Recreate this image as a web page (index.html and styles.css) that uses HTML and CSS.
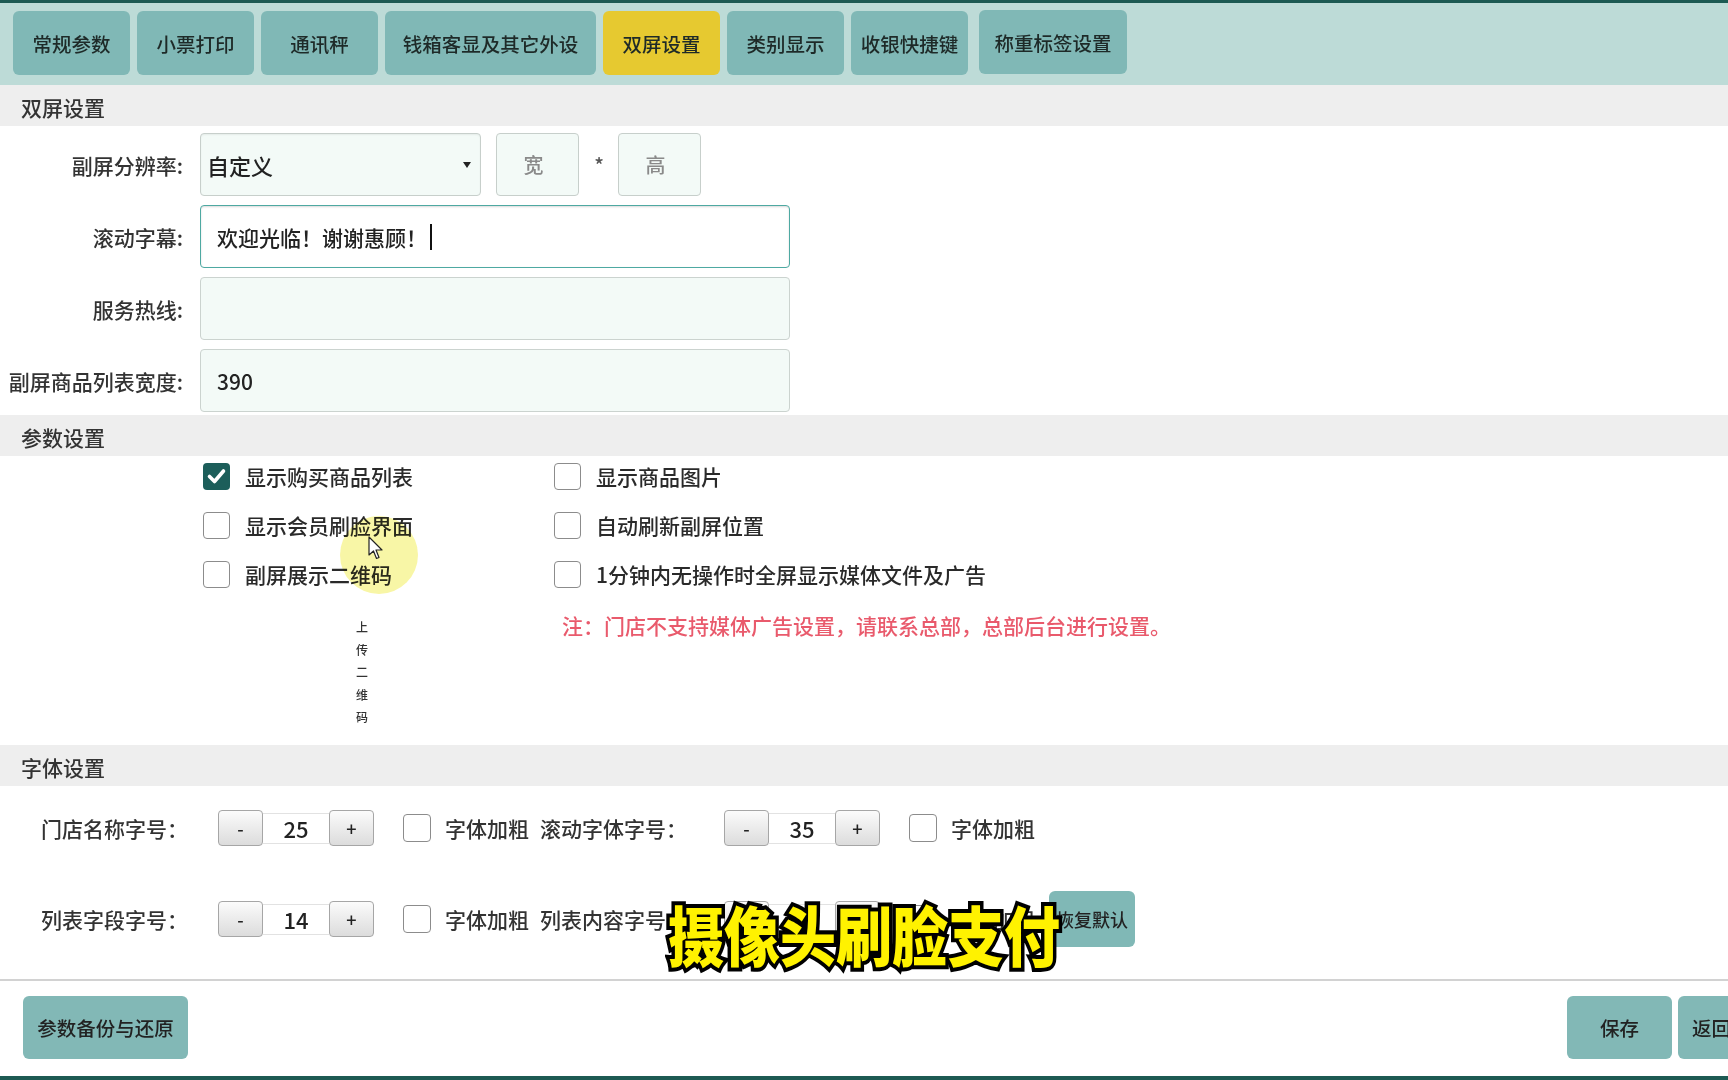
FILE: index.html
```html
<!DOCTYPE html>
<html lang="zh-CN">
<head>
<meta charset="utf-8">
<title>双屏设置</title>
<link rel="stylesheet" href="styles.css">
</head>
<body>
<div class="topline"></div>
<nav class="tabbar">
  <div class="tab">常规参数</div>
  <div class="tab">小票打印</div>
  <div class="tab">通讯秤</div>
  <div class="tab tab-wide">钱箱客显及其它外设</div>
  <div class="tab active">双屏设置</div>
  <div class="tab">类别显示</div>
  <div class="tab">收银快捷键</div>
  <div class="tab tab-label">称重标签设置</div>
</nav>

<div class="sec-head first">双屏设置</div>
<div class="form">
  <div class="frow">
    <label class="flabel">副屏分辨率:</label>
    <div class="select"><span>自定义</span><span class="caret"></span></div>
    <div class="dim">宽</div>
    <span class="star">*</span>
    <div class="dim">高</div>
  </div>
  <div class="frow">
    <label class="flabel">滚动字幕:</label>
    <div class="input wide focus"><span>欢迎光临！谢谢惠顾！</span><span class="textcaret"></span></div>
  </div>
  <div class="frow">
    <label class="flabel">服务热线:</label>
    <div class="input wide"></div>
  </div>
  <div class="frow">
    <label class="flabel">副屏商品列表宽度:</label>
    <div class="input wide"><span>390</span></div>
  </div>
</div>

<div class="sec-head">参数设置</div>
<div class="params">
  <div class="checks">
    <div class="chk"><span class="box checked"><svg viewBox="0 0 27 27" width="27" height="27"><path d="M6.5 13.5 L11.5 18.5 L20.5 8" fill="none" stroke="#fff" stroke-width="3.6" stroke-linecap="round" stroke-linejoin="round"/></svg></span><span>显示购买商品列表</span></div>
    <div class="chk"><span class="box"></span><span>显示商品图片</span></div>
    <div class="chk"><span class="box"></span><span>显示会员刷脸界面</span></div>
    <div class="chk"><span class="box"></span><span>自动刷新副屏位置</span></div>
    <div class="chk"><span class="box"></span><span>副屏展示二维码</span></div>
    <div class="chk"><span class="box"></span><span>1分钟内无操作时全屏显示媒体文件及广告</span></div>
  </div>
  <div class="extra">
    <div class="upload-cell"><span class="upload">上传二维码</span></div>
    <div class="note">注：门店不支持媒体广告设置，请联系总部，总部后台进行设置。</div>
  </div>
</div>

<div class="sec-head">字体设置</div>
<div class="fonts">
  <div class="srow">
    <span class="slabel">门店名称字号：</span>
    <div class="stepper"><span class="sbtn">-</span><span class="sval">25</span><span class="sbtn">+</span></div>
    <span class="box small"></span><span class="bold-txt">字体加粗</span>
    <span class="slabel2">滚动字体字号：</span>
    <div class="stepper"><span class="sbtn">-</span><span class="sval">35</span><span class="sbtn">+</span></div>
    <span class="box small"></span><span class="bold-txt">字体加粗</span>
  </div>
  <div class="srow">
    <span class="slabel">列表字段字号：</span>
    <div class="stepper"><span class="sbtn">-</span><span class="sval">14</span><span class="sbtn">+</span></div>
    <span class="box small"></span><span class="bold-txt">字体加粗</span>
    <span class="slabel2">列表内容字号：</span>
    <div class="stepper"><span class="sbtn">-</span><span class="sval">16</span><span class="sbtn">+</span></div>
    <span class="box small"></span><span class="bold-txt">字体加粗</span>
    <span class="reset-btn">恢复默认</span>
  </div>
</div>

<footer class="footer">
  <span class="fbtn backup">参数备份与还原</span>
  <div class="fright">
    <span class="fbtn">保存</span>
    <span class="fbtn back">返回</span>
  </div>
</footer>
<div class="bottomline"></div>

<div class="cursor-glow"></div>
<svg class="cursor" viewBox="0 0 16 25" width="16" height="25"><path d="M1 1 L1 19 L5.5 15 L8.5 22.5 L11 21.5 L8 14 L14 14 Z" fill="#fff" stroke="#222" stroke-width="1.2" stroke-linejoin="round"/></svg>
<div class="subtitle">摄像头刷脸支付</div>
</body>
</html>
```
FILE: styles.css
```css
* { box-sizing: border-box; }
html, body { margin: 0; padding: 0; }
body {
  width: 1728px;
  height: 1080px;
  overflow: hidden;
  position: relative;
  background: #ffffff;
  font-family: "Noto Sans CJK SC", "Noto Sans", sans-serif;
  font-weight: 500;
  color: #2a2a2a;
}

.topline { height: 3px; background: #1d5a53; }
.bottomline { height: 4px; background: #1d5a53; }

.tabbar {
  height: 82px;
  background: #bddbd7;
  display: flex;
  align-items: flex-start;
  gap: 7px;
  padding: 8px 13px 0;
}
.tab {
  width: 117px;
  height: 64px;
  border-radius: 6px;
  background: #80b8b6;
  display: flex;
  align-items: center;
  justify-content: center;
  font-size: 19.5px;
  color: #1e2a28;
}
.tab-wide { width: 211px; }
.tab-label { width: 148px; margin-left: 4px; margin-top: -1px; }
.tab.active { background: #e6c930; }

.sec-head {
  height: 41px;
  background: #eeeeee;
  font-size: 21px;
  padding: 2px 0 0 21px;
  display: flex;
  align-items: center;
  color: #333;
}

.form {
  padding: 7px 0 3px;
  display: flex;
  flex-direction: column;
  gap: 9px;
}
.frow {
  height: 63px;
  display: flex;
  align-items: center;
}
.flabel {
  width: 183px;
  flex: none;
  text-align: right;
  font-size: 21px;
  color: #333;
  margin-right: 17px;
  white-space: nowrap;
}
.select {
  width: 281px;
  height: 63px;
  border: 1px solid #c7cfcb;
  border-radius: 4px;
  background: #f3faf7;
  display: flex;
  align-items: center;
  justify-content: space-between;
  padding: 0 9px 0 6px;
  font-size: 22px;
  color: #222;
  box-shadow: inset 0 1px 2px rgba(0,0,0,0.06);
}
.caret {
  width: 0; height: 0;
  border-left: 4.5px solid transparent;
  border-right: 4.5px solid transparent;
  border-top: 6px solid #222;
}
.dim {
  width: 83px;
  height: 63px;
  margin-left: 15px;
  padding-right: 8px;
  border: 1px solid #c7cfcb;
  border-radius: 4px;
  background: #f3faf7;
  display: flex;
  align-items: center;
  justify-content: center;
  font-size: 20px;
  color: #8a8a8a;
}
.star {
  width: 24px;
  margin-left: 8px;
  margin-right: 7px;
  text-align: center;
  font-size: 20px;
  color: #555;
}
.star + .dim { margin-left: 0; }

.input {
  height: 63px;
  border: 1px solid #cbd3cf;
  border-radius: 4px;
  background: #f3faf7;
  display: flex;
  align-items: center;
  padding-left: 16px;
  font-size: 21px;
  color: #222;
}
.input.wide { width: 590px; }
.input.focus {
  border: 1.5px solid #4ea9a2;
  background: #ffffff;
  box-shadow: inset 0 1px 2px rgba(0,0,0,0.15);
}
.textcaret {
  width: 1.5px;
  height: 26px;
  background: #111;
  margin-left: 3px;
}

.params {
  height: 289px;
  padding-top: 5px;
}
.checks {
  margin-left: 203px;
  display: grid;
  grid-template-columns: 351px auto;
  grid-auto-rows: 30px;
  row-gap: 19px;
}
.chk {
  display: flex;
  align-items: center;
  gap: 15px;
  font-size: 21px;
  color: #2a2a2a;
  white-space: nowrap;
}
.box {
  width: 27px;
  height: 27px;
  flex: none;
  border: 1.5px solid #8c8c8c;
  border-radius: 4px;
  background: #fff;
  display: inline-block;
}
.box.checked {
  border: none;
  background: #1c5e5a;
}
.box.checked svg { display: block; }

.extra {
  margin-left: 203px;
  margin-top: 22px;
  display: grid;
  grid-template-columns: 351px auto;
}
.upload-cell { padding-left: 153px; padding-top: 5px; }
.upload {
  display: block;
  width: 13px;
  font-size: 12px;
  line-height: 22.5px;
  word-break: break-all;
  color: #333;
}
.note {
  margin-left: 8px;
  font-size: 21px;
  line-height: 29px;
  color: #e95a6c;
  white-space: nowrap;
}

.fonts {
  height: 193px;
  padding-top: 14px;
  display: flex;
  flex-direction: column;
  gap: 35px;
}
.srow {
  height: 56px;
  display: flex;
  align-items: center;
  padding-left: 41px;
  font-size: 21px;
  color: #333;
  white-space: nowrap;
}
.slabel { width: 177px; flex: none; }
.slabel2 { width: 184px; flex: none; margin-left: 11px; }
.stepper {
  display: flex;
  align-items: center;
  height: 36px;
}
.sbtn {
  width: 45px;
  height: 36px;
  border: 1px solid #a6a6a6;
  border-radius: 4px;
  background: linear-gradient(#fbfbfb, #dcdcdc);
  display: flex;
  align-items: center;
  justify-content: center;
  font-size: 18px;
  color: #222;
}
.sval {
  width: 66px;
  height: 31px;
  border-top: 1px solid #e2e2e2;
  border-bottom: 1px solid #e2e2e2;
  background: #fff;
  display: flex;
  align-items: center;
  justify-content: center;
  font-size: 22px;
  color: #222;
}
.box.small { width: 28px; height: 28px; margin-left: 29px; }
.bold-txt { width: 84px; margin-left: 14px; flex: none; }
.reset-btn {
  width: 86px;
  height: 56px;
  margin-left: 14px;
  border-radius: 6px;
  background: #80b8b6;
  display: flex;
  align-items: center;
  justify-content: center;
  font-size: 18px;
  color: #222;
}

.footer {
  height: 97px;
  border-top: 2px solid #d2d2d2;
  padding: 15px 0 17px;
  display: flex;
  justify-content: space-between;
  overflow: hidden;
}
.fbtn {
  height: 63px;
  width: 105px;
  border-radius: 6px;
  background: #82b8b6;
  display: flex;
  align-items: center;
  justify-content: center;
  font-size: 19.5px;
  color: #222;
  flex: none;
}
.fbtn.backup { width: 165px; margin-left: 23px; }
.fbtn.back { justify-content: flex-start; padding-left: 14px; }
.fright {
  display: flex;
  gap: 6px;
  margin-right: -55px;
}

.cursor-glow {
  position: absolute;
  left: 340px;
  top: 516px;
  width: 78px;
  height: 78px;
  border-radius: 50%;
  background: #f8f59c;
  mix-blend-mode: multiply;
  opacity: 0.9;
}
.cursor {
  position: absolute;
  left: 368px;
  top: 536px;
}
.subtitle {
  position: absolute;
  left: 668px;
  top: 901px;
  font-size: 56px;
  font-weight: 900;
  line-height: 1;
  color: #fff200;
  -webkit-text-stroke: 7px #000;
  paint-order: stroke fill;
  transform: scaleY(1.15);
  transform-origin: top left;
  white-space: nowrap;
}
```
